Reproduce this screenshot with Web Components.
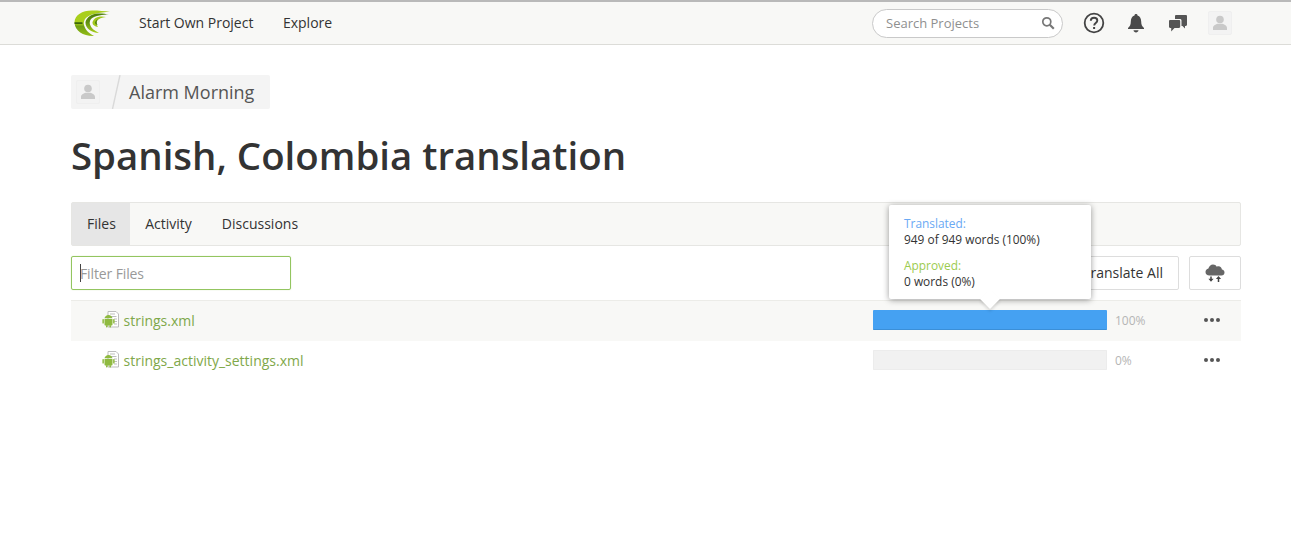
<!DOCTYPE html>
<html lang="en">
<head>
<meta charset="utf-8">
<title>Spanish, Colombia translation</title>
<style>
    html, body { margin: 0; padding: 0; background: #fff; }
    body { font-family: "Open Sans", "Liberation Sans", sans-serif; color: #333; }
    main { display: block; width: 1170px; margin-left: 71px; position: relative; }
</style>
</head>
<body>
<app-header></app-header>
<main>
    <crumb-bar name="Alarm Morning"></crumb-bar>
    <page-title>Spanish, Colombia translation</page-title>
    <tab-bar></tab-bar>
    <file-toolbar></file-toolbar>
    <file-row name="strings.xml" percent="100" striped></file-row>
    <file-row name="strings_activity_settings.xml" percent="0"></file-row>
    <progress-tip></progress-tip>
</main>

<script>
class UserAvatar extends HTMLElement {
    constructor() {
        super();
        this.attachShadow({ mode: 'open' });
        this.shadowRoot.innerHTML = `
            <style>
                :host { display: block; width: 24px; height: 24px; box-sizing: border-box; background: #f3f3f3; border: 1px solid #efefef; border-radius: 2px; }
                svg { display: block; width: 22px; height: 22px; }
            </style>
            <svg viewBox="0 0 22 22"><circle cx="11" cy="7.500" r="3.800" fill="#c9c9c9"/><path d="M4 18v-2c0-2.600 3-3.600 4.600-4.200h4.800c1.600.6 4.600 1.600 4.600 4.200v2z" fill="#c9c9c9"/></svg>
        `;
    }
}
customElements.define('user-avatar', UserAvatar);

class AppHeader extends HTMLElement {
    constructor() {
        super();
        this.attachShadow({ mode: 'open' });
        this.shadowRoot.innerHTML = `
            <style>
                :host { display: block; height: 45px; box-sizing: border-box; background: #f8f8f6; border-top: 2px solid #b9b9b9; border-bottom: 1px solid #dcdcd8; }
                .bar { display: flex; align-items: center; height: 42px; padding: 0 59px 0 74px; }
                .logo { width: 37px; height: 28px; display: block; margin-right: 28px; }
                a { color: #333; font-size: 14px; text-decoration: none; margin-right: 29.500px; padding-bottom: 2px; }
                .search { margin-left: auto; width: 191px; height: 29px; box-sizing: border-box; border: 1px solid #c9c9c9; border-radius: 15px; background: #fff; display: flex; align-items: center; justify-content: space-between; padding: 0 7px 0 13px; font-size: 13px; color: #8f8f8f; }
                .search svg { width: 14px; height: 14px; }
                .icons { display: flex; align-items: center; margin-left: 20px; }
                .icons svg { display: block; }
                .help { width: 22px; height: 22px; margin-right: 22px; }
                .bell { width: 18px; height: 20px; margin-right: 24px; }
                .chat { width: 18px; height: 17px; margin-right: 21px; }
            </style>
            <div class="bar">
                <svg class="logo" viewBox="0 0 37 28">
                    <defs>
                        <linearGradient id="outer" x1="0" y1="0" x2="0" y2="1">
                            <stop offset="0" stop-color="#a9cf1c"/>
                            <stop offset=".5" stop-color="#a9cf1c"/>
                            <stop offset=".62" stop-color="#6f9f12"/>
                            <stop offset="1" stop-color="#95bd18"/>
                        </linearGradient>
                        <linearGradient id="band" x1="0" y1="0" x2="0" y2="1">
                            <stop offset="0" stop-color="#4f800d"/>
                            <stop offset=".45" stop-color="#5f8f10"/>
                            <stop offset="1" stop-color="#a9cf1c"/>
                        </linearGradient>
                    </defs>
                    <path d="M.5 13C1 6 8 1.500 18 1.500c7 0 13 .5 18 1.500-10 0-21 2-25 7-1 2-1.500 4-1 6 1 4 4 8 10 11-10 .5-19-5-19.500-13z" fill="url(#outer)"/>
                    <path d="M11.500 13c1-5 6.500-8 12.500-8.500 4-.2 8 .5 11 1-6 0-14 1-18 4.500-1.500 2-1.500 4-1 5.500 1 3.500 4 6 9 8.500-8-.5-13.500-5-13.500-10z" fill="url(#band)"/>
                    <path d="M18.500 13c1-3 3.500-5 7.500-5.500 2.500-.2 4 0 6 .5-4 .5-7.500 1.500-9 4-1 2-.5 4 1 6-3-.5-5.500-2-5.500-4z" fill="#a2c81c"/>
                    <path d="M21 13.500c.4-1.500 1.500-2.600 3-3.300-1 1-1.400 2-1.300 3.300 0 1 .4 2 1 2.800-1.500-.5-2.700-1.500-2.700-2.800z" fill="#4f800d"/>
                    <rect x=".5" y="13.300" width="8" height="1.600" fill="#2f5a08"/>
                </svg>
                <a href="#">Start Own Project</a>
                <a href="#">Explore</a>
                <div class="search">
                    <span>Search Projects</span>
                    <svg viewBox="0 0 14 14" fill="none" stroke="#777" stroke-width="1.700"><circle cx="5.800" cy="5.800" r="4"/><path d="M8.800 8.800l4 4" stroke-width="2.200"/></svg>
                </div>
                <div class="icons">
                    <svg class="help" viewBox="0 0 22 22"><circle cx="11" cy="11" r="9.300" fill="none" stroke="#444" stroke-width="1.800"/><path d="M7.800 8.800c0-2 1.400-3.100 3.300-3.100s3.200 1.100 3.200 2.800c0 2.500-3.100 2.500-3.100 5" fill="none" stroke="#444" stroke-width="1.900"/><rect x="10.100" y="15" width="2" height="2" fill="#444"/></svg>
                    <svg class="bell" viewBox="0 0 18 20"><path d="M9 1c1 0 1.500.6 1.500 1.400C13 3.200 14.200 5.500 14.200 8.500c0 3.500 1 5 2.800 6.500v1H1v-1c1.800-1.500 2.800-3 2.800-6.500 0-3 1.200-5.300 3.700-6.100C7.500 1.600 8 1 9 1z" fill="#4a4a4a"/><path d="M6.500 17.200h5C11.300 18.600 10.300 19.400 9 19.400s-2.300-.8-2.500-2.200z" fill="#4a4a4a"/></svg>
                    <svg class="chat" viewBox="0 0 18 17"><path d="M6 1.200C6 .5 6.500 0 7.200 0h9.600c.7 0 1.200.5 1.200 1.200v8.600c0 .7-.5 1.200-1.200 1.200h-.8v2.500L13.500 11H12.500V5.500C12.500 4.500 11.800 4 11 4H6z" fill="#555"/><path d="M1.200 5H10c.7 0 1.200.5 1.200 1.200v5.600c0 .7-.5 1.200-1.200 1.200H5.500L2.200 16.500V13h-1C.5 13 0 12.500 0 11.800V6.200C0 5.500.5 5 1.200 5z" fill="#555"/></svg>
                    <user-avatar></user-avatar>
                </div>
            </div>
        `;
    }
}
customElements.define('app-header', AppHeader);

class CrumbBar extends HTMLElement {
    constructor() {
        super();
        this.attachShadow({ mode: 'open' });
        this.shadowRoot.innerHTML = `
            <style>
                :host { display: block; padding-top: 30px; }
                .crumb { display: inline-flex; align-items: center; height: 34px; box-sizing: border-box; padding: 0 15px 0 5px; background: #f4f4f4; border-radius: 2px; }
                svg { width: 10px; height: 34px; margin: 0 8px 0 11px; display: block; }
                span { font-size: 18px; color: #555; margin-right: 1px; }
            </style>
            <div class="crumb">
                <user-avatar></user-avatar>
                <svg viewBox="0 0 10 34"><path d="M9 0L1.500 34" stroke="#d9d9d9" stroke-width="1.400" fill="none"/></svg>
                <span></span>
            </div>
        `;
        this.shadowRoot.querySelector('span').textContent = this.getAttribute('name');
    }
}
customElements.define('crumb-bar', CrumbBar);

class PageTitle extends HTMLElement {
    constructor() {
        super();
        this.attachShadow({ mode: 'open' });
        this.shadowRoot.innerHTML = `
            <style>
                :host { display: block; height: 93px; box-sizing: border-box; padding-top: 20px; font-size: 38.400px; font-weight: 600; line-height: 52px; color: #333; white-space: nowrap; }
            </style>
            <slot></slot>
        `;
    }
}
customElements.define('page-title', PageTitle);

class TabBar extends HTMLElement {
    constructor() {
        super();
        this.attachShadow({ mode: 'open' });
        this.shadowRoot.innerHTML = `
            <style>
                :host { display: flex; height: 44px; box-sizing: border-box; background: #f8f8f6; border: 1px solid #e6e6e3; border-radius: 2px; }
                a { display: flex; align-items: center; padding: 0 15px 2px; font-size: 14px; color: #333; text-decoration: none; }
                a.on { background: #e6e6e6; padding-right: 14.400px; }
            </style>
            <a class="on" href="#">Files</a>
            <a href="#">Activity</a>
            <a href="#">Discussions</a>
        `;
    }
}
customElements.define('tab-bar', TabBar);

class FileToolbar extends HTMLElement {
    constructor() {
        super();
        this.attachShadow({ mode: 'open' });
        this.shadowRoot.innerHTML = `
            <style>
                :host { display: flex; align-items: center; gap: 10px; height: 55px; box-sizing: border-box; padding: 10px 0; border-bottom: 1px solid #ecece8; }
                .filter { width: 220px; height: 34px; box-sizing: border-box; border: 1px solid #93c560; border-radius: 2px; box-shadow: 0 0 1px rgba(140,193,82,.6); display: flex; align-items: center; padding-left: 8px; font-size: 14px; color: #999; margin-right: auto; letter-spacing: -.12px; }
                .filter i { width: 1px; height: 18px; background: #444; margin-right: -1px; }
                .btn { height: 34px; box-sizing: border-box; border: 1px solid #ddd; border-radius: 2px; background: #fff; display: flex; align-items: center; justify-content: center; font-size: 14px; color: #333; }
                .all { padding: 0 15px 2px; }
                .sync { width: 52px; }
                svg { width: 20px; height: 18px; display: block; }
            </style>
            <div class="filter"><i></i><span>Filter Files</span></div>
            <div class="btn all">Translate All</div>
            <div class="btn sync">
                <svg viewBox="0 0 20 18">
                    <path d="M4.500 11.500C2 11.500 .5 10 .5 8c0-1.800 1.200-3.200 2.900-3.500C4 2.300 5.700.5 8 .5c1.700 0 3 .8 3.800 2.200.5-.3 1.100-.4 1.700-.4 1.900 0 3.200 1.400 3.400 3.300 1.500.2 2.600 1.300 2.600 2.900 0 1.700-1.300 3-3 3z" fill="#666"/>
                    <path d="M6 12.500v2.500M13.500 14.500v3.500" stroke="#444" stroke-width="1.500" fill="none"/>
                    <path d="M3.400 14.800h5.200L6 17.800zM10.900 15l2.600-3 2.600 3z" fill="#444"/>
                </svg>
            </div>
        `;
    }
}
customElements.define('file-toolbar', FileToolbar);

class FileRow extends HTMLElement {
    constructor() {
        super();
        const percent = this.getAttribute('percent');
        this.attachShadow({ mode: 'open' });
        this.shadowRoot.innerHTML = `
            <style>
                :host { display: flex; align-items: center; height: 40px; box-sizing: border-box; padding: 0 0 2px 31px; }
                :host([striped]) { background: #f8f8f6; }
                svg.file { width: 17px; height: 18px; margin-right: 4.500px; flex: none; display: block; }
                .name { font-size: 14px; color: #7fa84a; margin-right: auto; white-space: nowrap; }
                .track { width: 234px; height: 20px; background: #f1f1f1; box-shadow: inset 0 0 0 1px #ececec; border-radius: 1px; flex: none; }
                .track i { display: block; height: 20px; background: #45a1f2; box-sizing: border-box; border-bottom: 1px solid #3b8fd8; border-radius: 1px; }
                .pct { width: 96px; box-sizing: border-box; padding-left: 8px; font-size: 12px; color: #b5b5b5; flex: none; }
                svg.more { width: 18px; height: 6px; display: block; margin-right: 20px; flex: none; }
            </style>
            <svg class="file" viewBox="0 0 17 18">
                <path d="M6 .5h8l2.500 2.500v13h-10.500z" fill="#fff" stroke="#bdbdbd"/>
                <path d="M8 3h5M8 5.500h6.500M12 8h3M12 10.500h3M12 13h3" stroke="#bdbdbd" fill="none"/>
                <path d="M2.500 7.300c.3-2 2-3.300 4-3.300s3.700 1.300 4 3.300z" fill="#8fba40"/>
                <path d="M2.500 8h8v5.600c0 .6-.4 1-1 1h-6c-.6 0-1-.4-1-1z" fill="#8fba40"/>
                <rect x=".4" y="8" width="1.500" height="4.600" rx=".7" fill="#8fba40"/>
                <rect x="11.100" y="8" width="1.500" height="4.600" rx=".7" fill="#8fba40"/>
                <rect x="4" y="14" width="1.600" height="2.500" rx=".7" fill="#8fba40"/>
                <rect x="7.400" y="14" width="1.600" height="2.500" rx=".7" fill="#8fba40"/>
            </svg>
            <span class="name"></span>
            <div class="track">${percent > 0 ? '<i style="width:' + percent + '%"></i>' : ''}</div>
            <span class="pct">${percent}%</span>
            <svg class="more" viewBox="0 0 18 6" fill="#555"><circle cx="3" cy="3" r="2"/><circle cx="9" cy="3" r="2"/><circle cx="15" cy="3" r="2"/></svg>
        `;
        this.shadowRoot.querySelector('.name').textContent = this.getAttribute('name');
    }
}
customElements.define('file-row', FileRow);

class ProgressTip extends HTMLElement {
    constructor() {
        super();
        this.attachShadow({ mode: 'open' });
        this.shadowRoot.innerHTML = `
            <style>
                :host { display: block; position: absolute; left: 818px; top: 160px; width: 202px; height: 94px; box-sizing: border-box; padding: 10px 15px; background: #fff; border-radius: 2px; box-shadow: 0 1px 6px rgba(0,0,0,.4); font-size: 11.900px; line-height: 16px; color: #333; }
                :host::after { content: ""; position: absolute; left: 94px; top: 87px; width: 14px; height: 14px; background: #fff; transform: rotate(45deg); box-shadow: 2px 2px 3px rgba(0,0,0,.12); }
                p { margin: 0 0 10px; }
                b { display: block; font-weight: 400; }
                .t { color: #6aa9f4; }
                .a { color: #9ccb50; }
            </style>
            <p><b class="t">Translated:</b>949 of 949 words (100%)</p>
            <p><b class="a">Approved:</b>0 words (0%)</p>
        `;
    }
}
customElements.define('progress-tip', ProgressTip);
</script>
</body>
</html>
